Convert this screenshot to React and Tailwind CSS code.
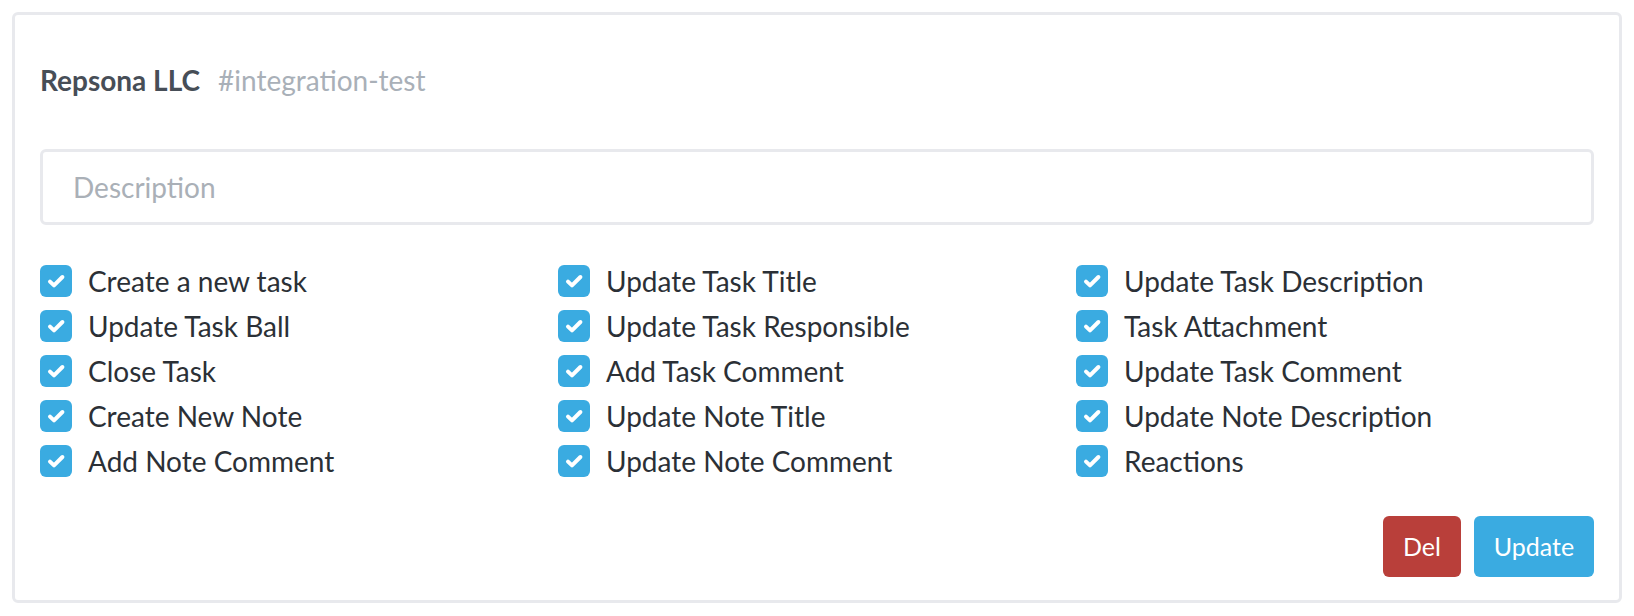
import React from "react";

const events = [
  "Create a new task",
  "Update Task Title",
  "Update Task Description",
  "Update Task Ball",
  "Update Task Responsible",
  "Task Attachment",
  "Close Task",
  "Add Task Comment",
  "Update Task Comment",
  "Create New Note",
  "Update Note Title",
  "Update Note Description",
  "Add Note Comment",
  "Update Note Comment",
  "Reactions",
];

const CheckIcon = () => (
  <svg viewBox="0 0 32 32" className="w-[32px] h-[32px]" fill="none">
    <path
      d="M10 16.6 L14 20.4 L22.4 12"
      stroke="white"
      strokeWidth="4"
      strokeLinecap="round"
      strokeLinejoin="round"
    />
  </svg>
);

const App = () => {
  return (
    <div
      className="bg-white min-h-screen p-[12px]"
      style={{ fontFamily: 'Lato, "Noto Sans", sans-serif' }}
    >
      <div className="border-[3px] border-[#e8e9ed] rounded-md px-[25px] pt-[49px] pb-[23px]">
        {/* Header */}
        <div className="flex items-baseline gap-[18px] leading-[32px]">
          <span className="text-[28px] font-bold text-[#474e57]">Repsona LLC</span>
          <span className="text-[28px] text-[#a9b0b8]">#integration-test</span>
        </div>

        {/* Description input */}
        <input
          type="text"
          placeholder="Description"
          className="mt-[53px] w-full h-[76px] border-[3px] border-[#e8e9ed] rounded-md px-[30px] text-[28px] text-[#2b3036] placeholder:text-[#aab0b7] outline-none"
        />

        {/* Event checkboxes */}
        <div className="mt-[40px] grid grid-cols-3 gap-y-[13px]">
          {events.map((label) => (
            <label key={label} className="flex items-center gap-[16px] h-[32px]">
              <span className="w-[32px] h-[32px] rounded-[6px] bg-[#3aabe1] flex items-center justify-center shrink-0">
                <CheckIcon />
              </span>
              <span className="text-[28px] leading-[32px] text-[#2b3036]">{label}</span>
            </label>
          ))}
        </div>

        {/* Actions */}
        <div className="mt-[39px] flex justify-end gap-[13px]">
          <button className="h-[61px] w-[78px] rounded-[6px] bg-[#b93f3a] text-white text-[25px]">
            Del
          </button>
          <button className="h-[61px] w-[120px] rounded-[6px] bg-[#3aabe1] text-white text-[25px]">
            Update
          </button>
        </div>
      </div>
    </div>
  );
};

export default App;
